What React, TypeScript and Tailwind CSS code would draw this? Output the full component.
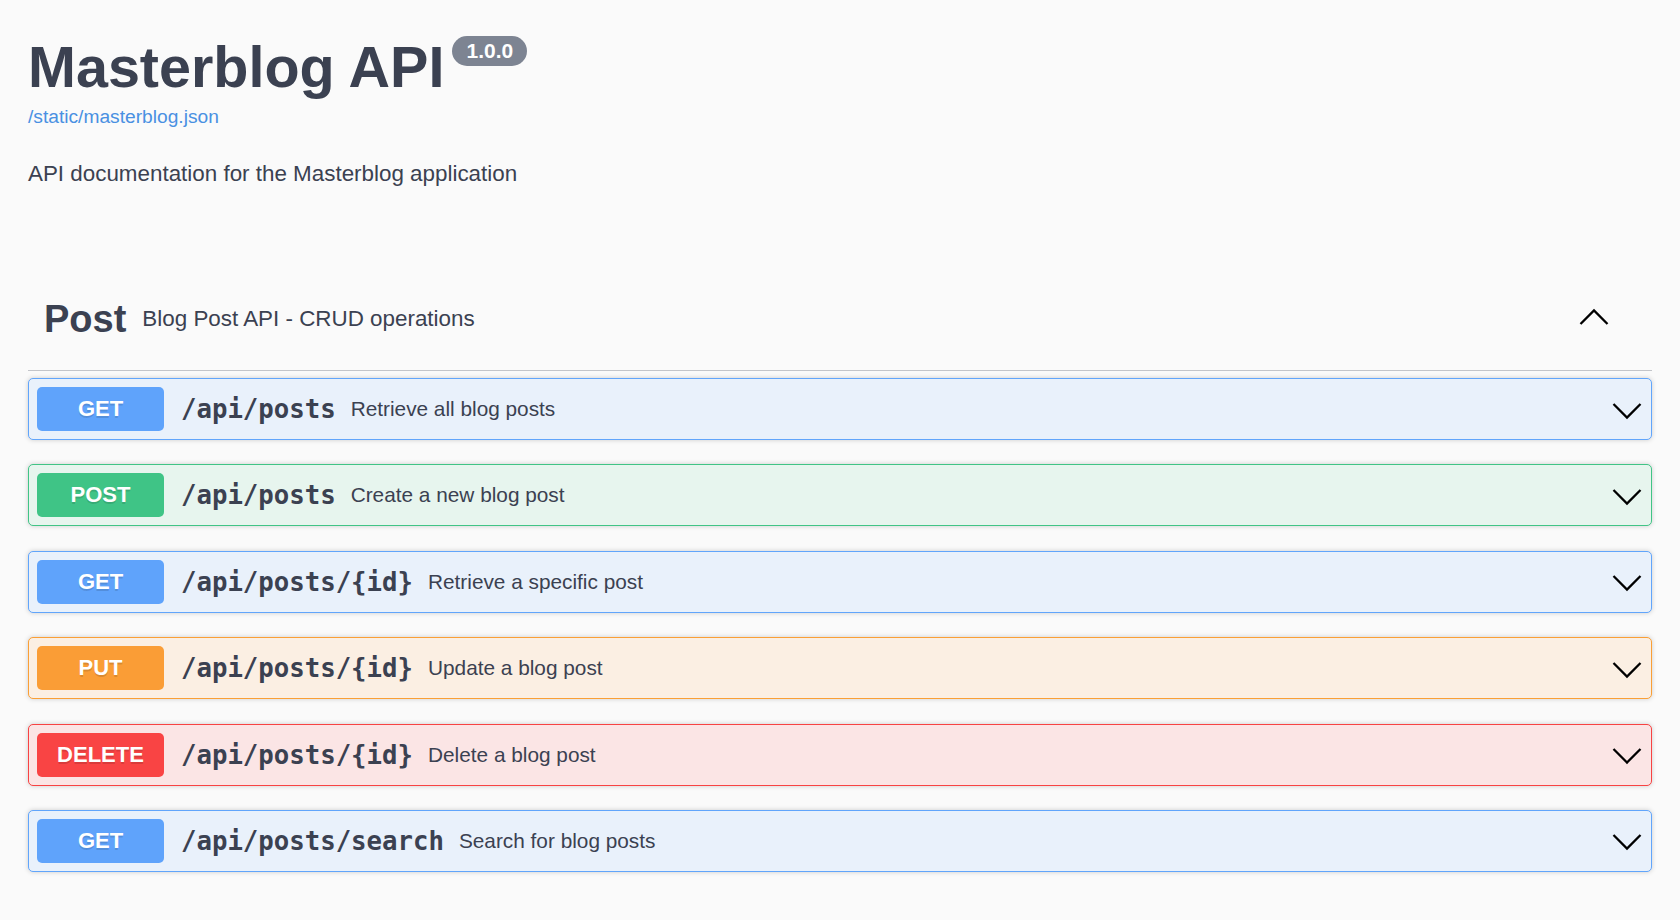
import React from "react";

type Op = { m: string; path: string; desc: string; box: string; badge: string };

const ops: Op[] = [
  { m: "GET", path: "/api/posts", desc: "Retrieve all blog posts", box: "border-[#61a5fb] bg-[#e9f1fb]", badge: "bg-[#5fa3fb]" },
  { m: "POST", path: "/api/posts", desc: "Create a new blog post", box: "border-[#41c486] bg-[#e7f5ee]", badge: "bg-[#3fc486]" },
  { m: "GET", path: "/api/posts/{id}", desc: "Retrieve a specific post", box: "border-[#61a5fb] bg-[#e9f1fb]", badge: "bg-[#5fa3fb]" },
  { m: "PUT", path: "/api/posts/{id}", desc: "Update a blog post", box: "border-[#fa9f36] bg-[#fbefe3]", badge: "bg-[#fa9d36]" },
  { m: "DELETE", path: "/api/posts/{id}", desc: "Delete a blog post", box: "border-[#f84343] bg-[#fbe5e5]", badge: "bg-[#f94444]" },
  { m: "GET", path: "/api/posts/search", desc: "Search for blog posts", box: "border-[#61a5fb] bg-[#e9f1fb]", badge: "bg-[#5fa3fb]" },
];

function ChevronDown() {
  return (
    <svg width="32" height="32" viewBox="0 0 32 32" className="shrink-0 mt-[3px]">
      <polyline points="2.5,9 16,22.5 29.5,9" fill="none" stroke="#000" strokeWidth="2.3" strokeLinecap="butt" strokeLinejoin="miter" />
    </svg>
  );
}

function ChevronUp() {
  return (
    <svg width="32" height="32" viewBox="0 0 32 32" className="shrink-0 -mt-[2px]">
      <polyline points="2.5,23 16,9.5 29.5,23" fill="none" stroke="#000" strokeWidth="2.3" strokeLinecap="butt" strokeLinejoin="miter" />
    </svg>
  );
}

export default function App() {
  return (
    <div className="min-h-screen bg-[#fafafa] text-[#3b4151] font-['Liberation_Sans',Arial,sans-serif]">
      <div className="px-[28px] pt-[35px]">
        {/* Info */}
        <div className="flex items-start">
          <h1 className="text-[57.5px] leading-[64px] font-bold text-[#3b4151] m-0">Masterblog API</h1>
          <span className="ml-[8px] mt-[1px] h-[30px] w-[75px] rounded-full bg-[#7d8492] text-white text-[21px] font-bold leading-[30px] text-center">
            1.0.0
          </span>
        </div>
        <div className="mt-[7px] h-[22px]">
          <a className="text-[19.2px] leading-[22px] text-[#4990e2]">/static/masterblog.json</a>
        </div>
        <p className="mt-[33px] text-[22.4px] leading-[26px] text-[#3b4151]">
          API documentation for the Masterblog application
        </p>

        {/* Tag */}
        <div className="mt-[78px]">
          <div className="flex items-center h-[106px] border-b border-[#c3c5ca] pl-[16px] pr-[42px]">
            <span className="text-[38px] leading-[44px] font-bold text-[#3b4151] mt-[3px]">Post</span>
            <span className="flex-1 ml-[16px] text-[22.4px] leading-[26px] text-[#3b4151] mt-[3px]">
              Blog Post API - CRUD operations
            </span>
            <ChevronUp />
          </div>

          <div className="mt-[7px] flex flex-col gap-[24.4px]">
            {ops.map((op, i) => (
              <div
                key={i}
                className={`flex items-center border rounded-[5px] p-[8px] shadow-[0_0_5px_rgba(0,0,0,0.19)] ${op.box}`}
              >
                <span
                  className={`w-[127px] h-[44px] shrink-0 rounded-[5px] text-white text-[22px] font-bold leading-[44px] text-center [text-shadow:0_1.5px_0_rgba(0,0,0,0.12)] ${op.badge}`}
                >
                  {op.m}
                </span>
                <span className="pl-[17px] pr-[15px] font-['DejaVu_Sans_Mono',monospace] font-bold text-[25.7px] leading-[30px] text-[#3b4151] whitespace-nowrap">
                  {op.path}
                </span>
                <span className="flex-1 text-[20.8px] leading-[24px] text-[#3b4151]">{op.desc}</span>
                <ChevronDown />
              </div>
            ))}
          </div>
        </div>
      </div>
    </div>
  );
}
